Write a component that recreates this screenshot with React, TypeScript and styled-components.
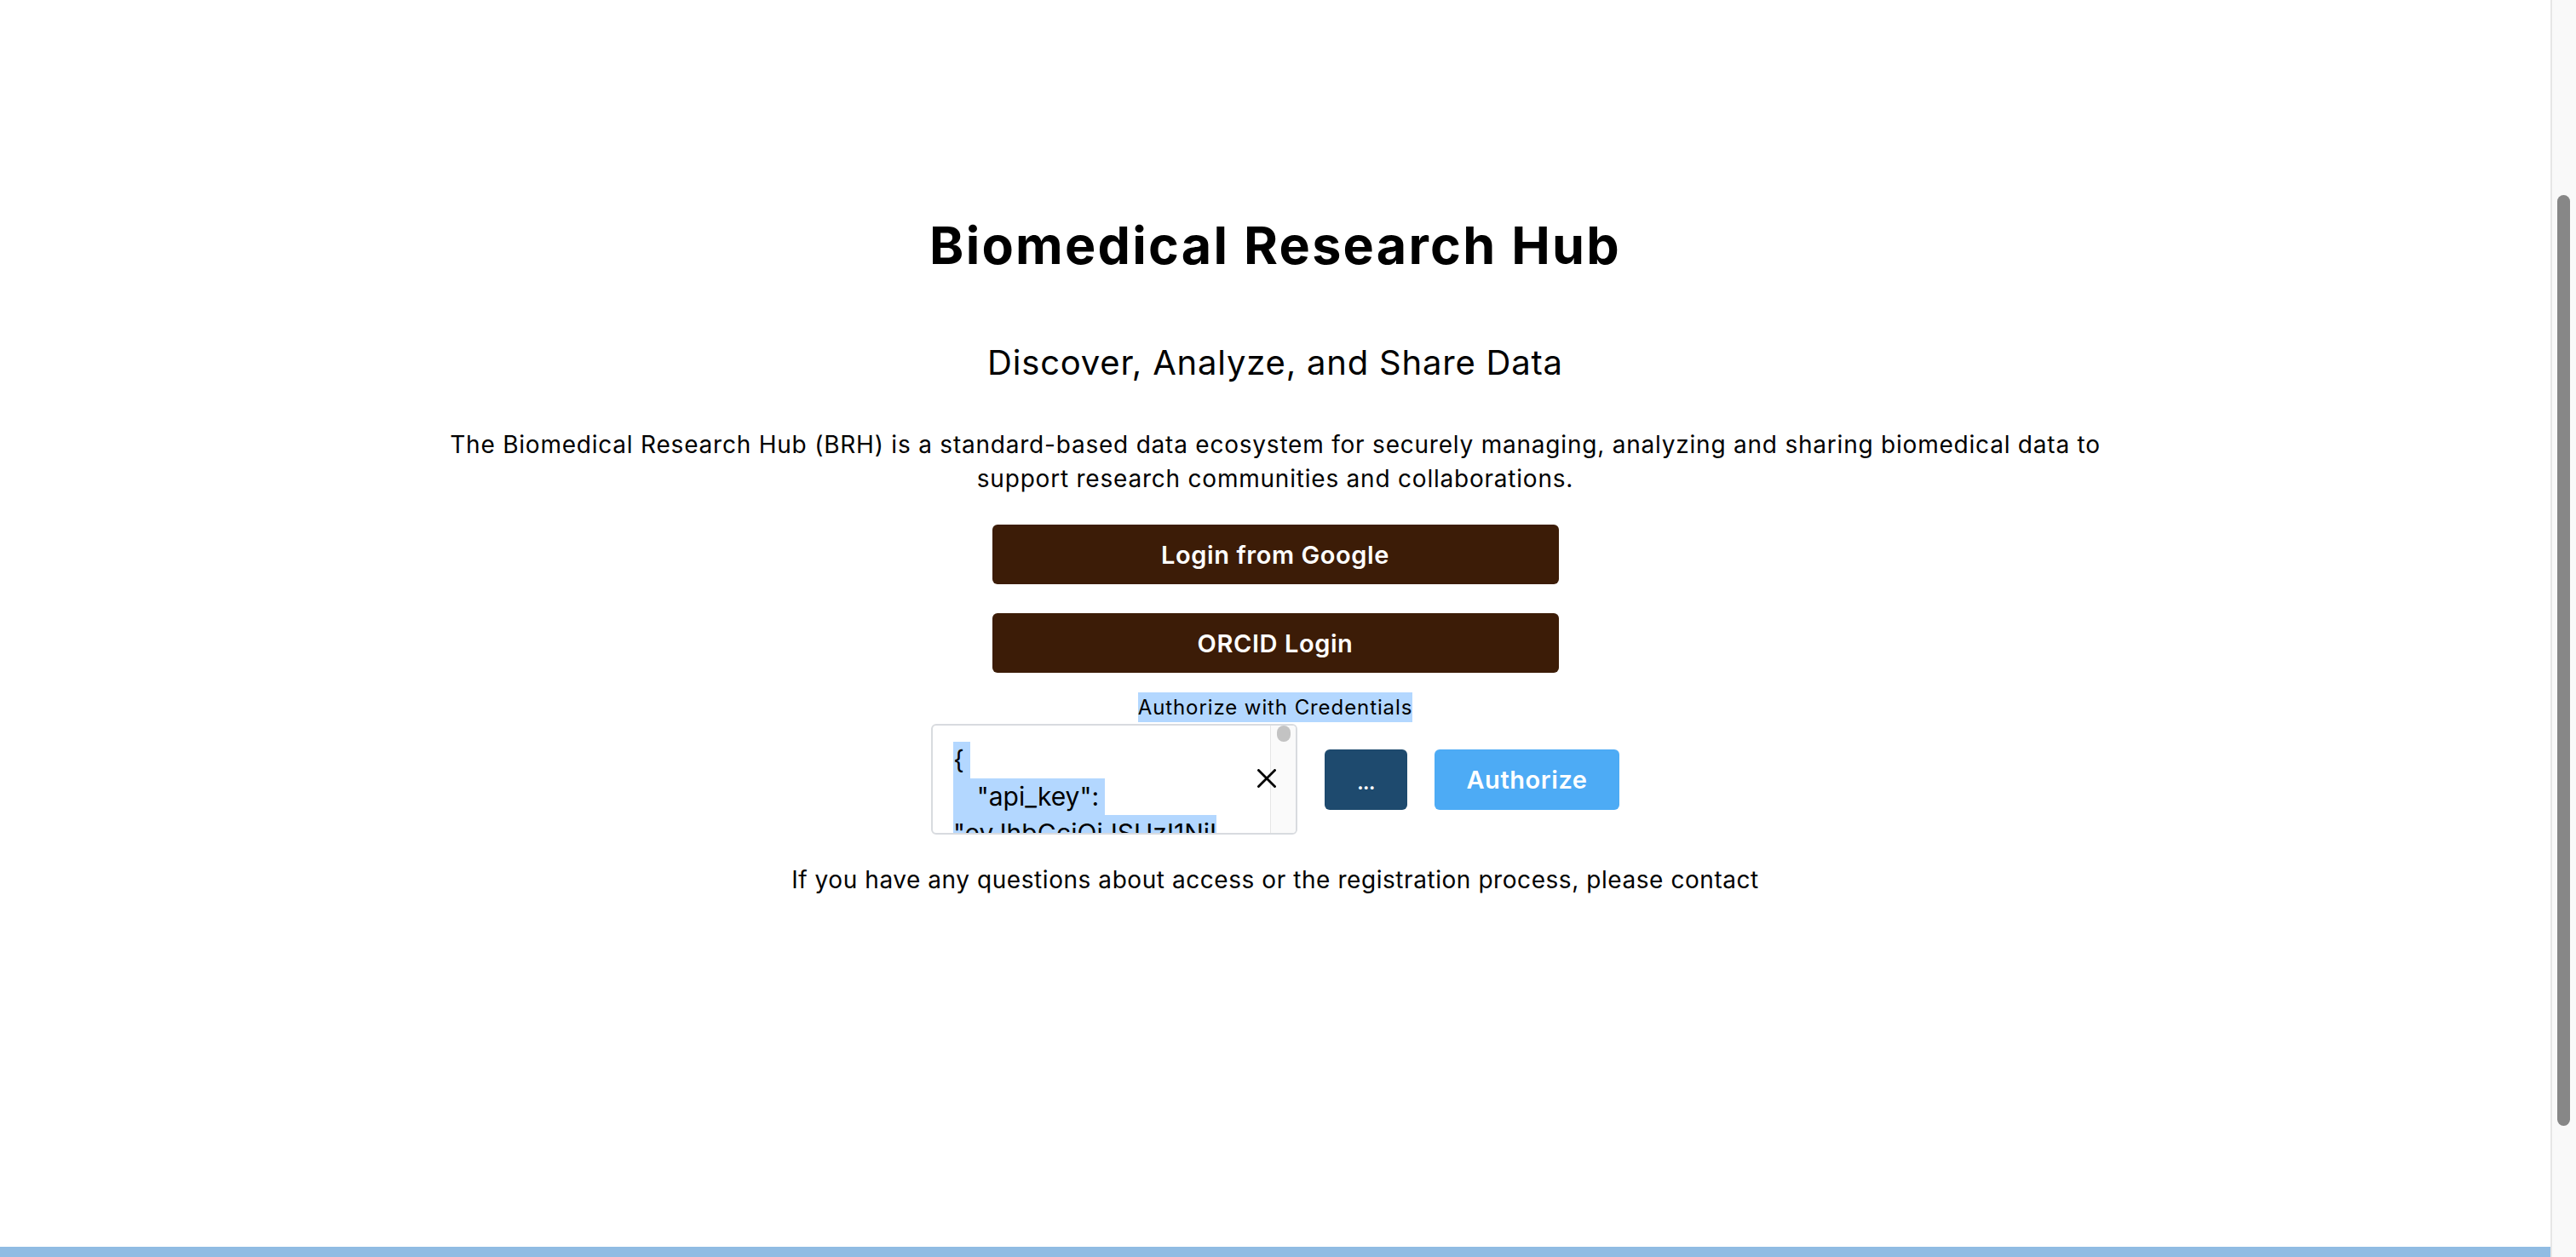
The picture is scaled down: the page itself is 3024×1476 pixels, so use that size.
import React from "react";
import styled, { createGlobalStyle } from "styled-components";

const GlobalStyle = createGlobalStyle`
  html, body {
    margin: 0;
    padding: 0;
    height: 100%;
    overflow: hidden;
    background: #ffffff;
  }
  body {
    font-family: Inter, "Noto Sans", "DejaVu Sans", sans-serif;
    color: #000000;
  }
  #root {
    height: 100%;
  }
`;

const Page = styled.div`
  display: flex;
  width: 100%;
  height: 100vh;
`;

const Main = styled.main`
  flex: 1;
  min-width: 0;
  display: flex;
  flex-direction: column;
`;

const Content = styled.section`
  flex: 1;
  display: flex;
  flex-direction: column;
  align-items: center;
  padding-top: 252px;
`;

const Title = styled.h1`
  margin: 0;
  font-size: 61px;
  line-height: 72px;
  font-weight: 700;
  letter-spacing: 0.037em;
`;

const Subtitle = styled.h2`
  margin: 78px 0 0;
  font-size: 40px;
  line-height: 48px;
  font-weight: 400;
  letter-spacing: 0.02em;
`;

const Description = styled.p`
  margin: 52px 0 0;
  width: 2000px;
  text-align: center;
  font-size: 28px;
  line-height: 40px;
  font-weight: 400;
  letter-spacing: 0.028em;
`;

const LoginButton = styled.button`
  margin-top: 34px;
  width: 665px;
  height: 70px;
  border: 0;
  border-radius: 6px;
  background: #3c1c07;
  color: #ffffff;
  font-family: Inter, "Noto Sans", sans-serif;
  font-size: 29px;
  font-weight: 600;
  letter-spacing: 0.02em;
  cursor: pointer;
`;

const CredLabel = styled.div`
  margin-top: 23px;
  height: 35px;
  line-height: 35px;
  font-size: 24px;
  letter-spacing: 0.038em;
  background: #b3d7ff;
`;

const AuthRow = styled.div`
  margin-top: 2px;
  display: flex;
  align-items: center;
  gap: 32px;
`;

const CredField = styled.div`
  position: relative;
  box-sizing: border-box;
  width: 430px;
  height: 130px;
  border: 2px solid #d8dbdf;
  border-radius: 6px;
  display: flex;
  overflow: hidden;
  background: #ffffff;
`;

const FieldText = styled.div`
  flex: 1;
  min-width: 0;
  padding: 19px 0 0 24px;
  overflow: hidden;
  font-size: 30px;
  line-height: 43px;
  word-spacing: -1.5px;
`;

const FieldLine = styled.div`
  height: 43px;
  white-space: pre;
`;

const Sel = styled.span`
  display: inline-block;
  height: 43px;
  background: #b3d7ff;
`;

const FieldScrollbar = styled.div`
  box-sizing: border-box;
  width: 30px;
  border-left: 1px solid #e6e6e6;
  background: #fafafa;
  display: flex;
  justify-content: center;
`;

const FieldThumb = styled.div`
  width: 16px;
  height: 19px;
  border-radius: 8px;
  background: #c3c3c3;
`;

const ClearButton = styled.button`
  position: absolute;
  right: 23px;
  top: 51px;
  width: 22px;
  height: 22px;
  padding: 0;
  border: 0;
  background: transparent;
  display: flex;
  cursor: pointer;
`;

const ActionButton = styled.button<{ $variant: "dark" | "light" }>`
  height: 71px;
  width: ${(p) => (p.$variant === "dark" ? "97px" : "217px")};
  border: 0;
  border-radius: 6px;
  background: ${(p) => (p.$variant === "dark" ? "#1e4a6e" : "#4dabf5")};
  color: #ffffff;
  font-family: Inter, "Noto Sans", sans-serif;
  font-size: ${(p) => (p.$variant === "dark" ? "22px" : "29px")};
  font-weight: ${(p) => (p.$variant === "dark" ? 700 : 600)};
  letter-spacing: ${(p) => (p.$variant === "dark" ? "-0.5px" : "0.02em")};
  padding: ${(p) => (p.$variant === "dark" ? "8px 0 0" : "0")};
  cursor: pointer;
`;

const Contact = styled.p`
  margin: 33px 0 0;
  font-size: 28px;
  line-height: 40px;
  letter-spacing: 0.02em;
`;

const FooterStrip = styled.footer`
  height: 12px;
  background: #90bce3;
`;

const PageScrollbar = styled.aside`
  box-sizing: border-box;
  width: 30px;
  height: 100%;
  border-left: 2px solid #e6e6e6;
  background: #f9f9f9;
  padding: 229px 0 0 6px;
`;

const PageThumb = styled.div`
  width: 15px;
  height: 1093px;
  border-radius: 8px;
  background: #878787;
`;

const CloseIcon = () => (
  <svg width="22" height="22" viewBox="0 0 22 22" fill="none">
    <path d="M1.5 1.5 L20.5 20.5 M20.5 1.5 L1.5 20.5" stroke="#000" strokeWidth="2.8" strokeLinecap="square" />
  </svg>
);

export default function App() {
  return (
    <>
      <GlobalStyle />
      <Page>
        <Main>
          <Content>
            <Title>Biomedical Research Hub</Title>
            <Subtitle>Discover, Analyze, and Share Data</Subtitle>
            <Description>
              The Biomedical Research Hub (BRH) is a standard-based data ecosystem for securely managing,
              analyzing and sharing biomedical data to support research communities and collaborations.
            </Description>
            <LoginButton>Login from Google</LoginButton>
            <LoginButton>ORCID Login</LoginButton>
            <CredLabel>Authorize with Credentials</CredLabel>
            <AuthRow>
              <CredField>
                <FieldText>
                  <FieldLine>
                    <Sel>{"{ "}</Sel>
                  </FieldLine>
                  <FieldLine>
                    <Sel>{'    "api_key": '}</Sel>
                  </FieldLine>
                  <FieldLine>
                    <Sel>{'"eyJhbGciOiJSUzI1NiI'}</Sel>
                  </FieldLine>
                </FieldText>
                <FieldScrollbar>
                  <FieldThumb />
                </FieldScrollbar>
                <ClearButton aria-label="Clear">
                  <CloseIcon />
                </ClearButton>
              </CredField>
              <ActionButton $variant="dark">...</ActionButton>
              <ActionButton $variant="light">Authorize</ActionButton>
            </AuthRow>
            <Contact>
              If you have any questions about access or the registration process, please contact
            </Contact>
          </Content>
          <FooterStrip />
        </Main>
        <PageScrollbar>
          <PageThumb />
        </PageScrollbar>
      </Page>
    </>
  );
}
